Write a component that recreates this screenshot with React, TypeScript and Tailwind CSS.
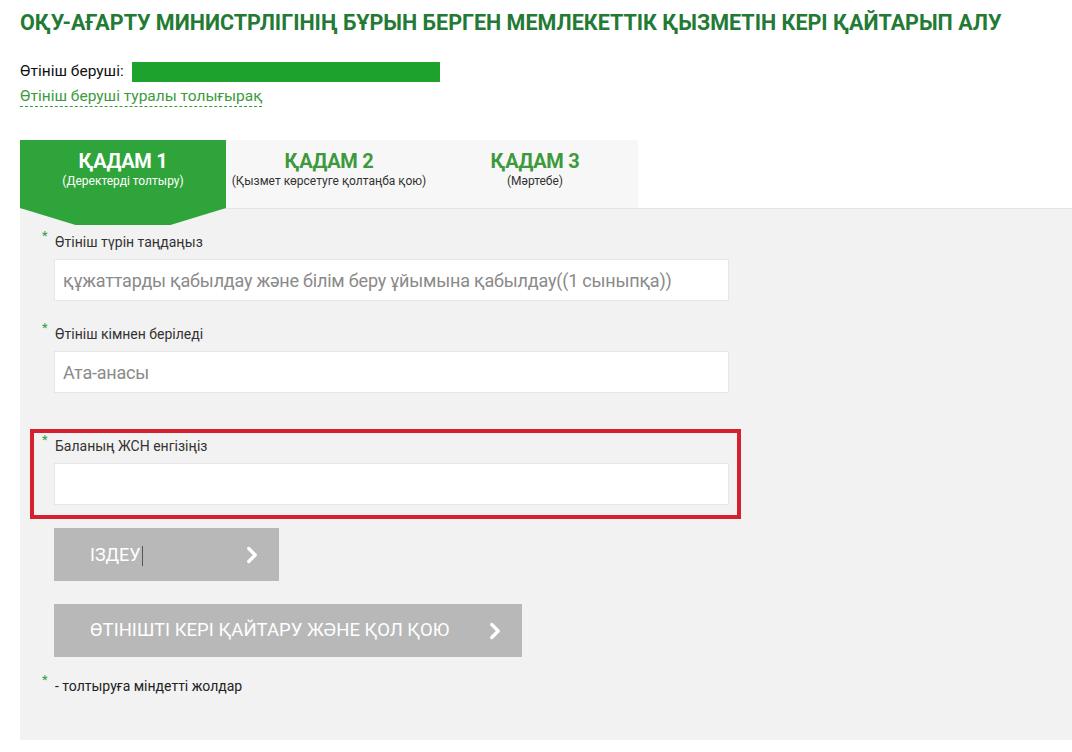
import { ChevronRight } from 'lucide-react';

const font = { fontFamily: 'Roboto, "Noto Sans", sans-serif' };

function Star() {
  return <span className="w-[13px] shrink-0 text-[#3c9a3c] text-[13px] leading-none -mt-1">*</span>;
}

function Field({ label, value }: { label: string; value?: string }) {
  return (
    <div>
      <div className="flex items-start text-[14px] text-[#333] leading-[18px] pl-[22px]">
        <Star />
        <span>{label}</span>
      </div>
      <div className="ml-[34px] mt-[8px] w-[675px] h-[42px] bg-white border border-[#e6e6e6] flex items-center px-[8px] text-[18px] text-[#8a8a8a] tracking-[-0.2px]">
        {value}
      </div>
    </div>
  );
}

export default function App() {
  return (
    <div className="w-[1072px] h-[752px] bg-white overflow-hidden" style={font}>
      <h1 className="pl-[20px] pt-[10px] text-[21.5px] font-bold text-[#237a34] leading-[26px]">
        ОҚУ-АҒАРТУ МИНИСТРЛІГІНІҢ БҰРЫН БЕРГЕН МЕМЛЕКЕТТІК ҚЫЗМЕТІН КЕРІ ҚАЙТАРЫП АЛУ
      </h1>

      <div className="pl-[20px] mt-[26px] flex items-center text-[15.5px] text-[#111] h-[20px]">
        <span>Өтініш беруші:</span>
        <span className="ml-[8px] w-[308px] h-[20px] bg-[#1ea22e]" />
      </div>
      <div className="pl-[20px] mt-[3px] leading-[22px]">
        <span className="text-[15.5px] text-[#3c9a3c] border-b border-dashed border-[#3c9a3c] pb-[1px]">
          Өтініш беруші туралы толығырақ
        </span>
      </div>

      {/* tabs */}
      <div className="ml-[20px] mt-[33px] flex">
        <div className="flex w-[618px] h-[68px] bg-[#f7f7f7]">
          <div className="relative w-[206px] h-[68px]">
            <div
              className="absolute left-0 top-0 w-[206px] h-[85px] bg-[#2ea43a] z-10"
              style={{ clipPath: 'polygon(0 0,100% 0,100% 68px,73% 85px,27% 85px,0 68px)' }}
            />
            <div className="relative z-20 flex flex-col items-center pt-[9px] text-white">
              <span className="text-[20px] font-bold leading-[24px] tracking-[-0.3px]">ҚАДАМ 1</span>
              <span className="text-[12px] leading-[16px]">(Деректерді толтыру)</span>
            </div>
          </div>
          <div className="w-[206px] flex flex-col items-center pt-[9px]">
            <span className="text-[20px] font-bold leading-[24px] text-[#3c9a3c] tracking-[-0.3px]">ҚАДАМ 2</span>
            <span className="text-[12px] leading-[16px] text-[#333]">(Қызмет көрсетуге қолтаңба қою)</span>
          </div>
          <div className="w-[206px] flex flex-col items-center pt-[9px]">
            <span className="text-[20px] font-bold leading-[24px] text-[#3c9a3c] tracking-[-0.3px]">ҚАДАМ 3</span>
            <span className="text-[12px] leading-[16px] text-[#333]">(Мәртебе)</span>
          </div>
        </div>
      </div>

      {/* panel */}
      <div className="ml-[20px] h-[532px] bg-[#f2f2f2] border-t border-[#e4e4e4] pt-[24px]">
        <Field label="Өтініш түрін таңдаңыз" value="құжаттарды қабылдау және білім беру ұйымына қабылдау((1 сыныпқа))" />
        <div className="mt-[24px]">
          <Field label="Өтініш кімнен беріледі" value="Ата-анасы" />
        </div>

        <div className="mt-[36px] ml-[10px] w-[711px] h-[90px] border-[4px] border-[#d3212f] pt-[4px]">
          <div className="-ml-[14px]">
            <Field label="Баланың ЖСН енгізіңіз" />
          </div>
        </div>

        <button className="mt-[9px] ml-[34px] w-[225px] h-[53px] bg-[#b8b8b8] flex items-center justify-between pl-[36px] pr-[14px] text-white text-[18px]">
          <span>ІЗДЕУ<span className="inline-block w-px h-[20px] bg-[#555] align-middle ml-[1px]" /></span>
          <ChevronRight size={26} strokeWidth={3} />
        </button>

        <button className="mt-[23px] ml-[34px] w-[468px] h-[53px] bg-[#b8b8b8] flex items-center justify-between pl-[36px] pr-[14px] text-white text-[18.5px]">
          <span>ӨТІНІШТІ КЕРІ ҚАЙТАРУ ЖӘНЕ ҚОЛ ҚОЮ</span>
          <ChevronRight size={26} strokeWidth={3} />
        </button>

        <div className="mt-[20px] pl-[22px] flex items-start text-[14px] text-[#222] leading-[18px]">
          <Star />
          <span>- толтыруға міндетті жолдар</span>
        </div>
      </div>
    </div>
  );
}
